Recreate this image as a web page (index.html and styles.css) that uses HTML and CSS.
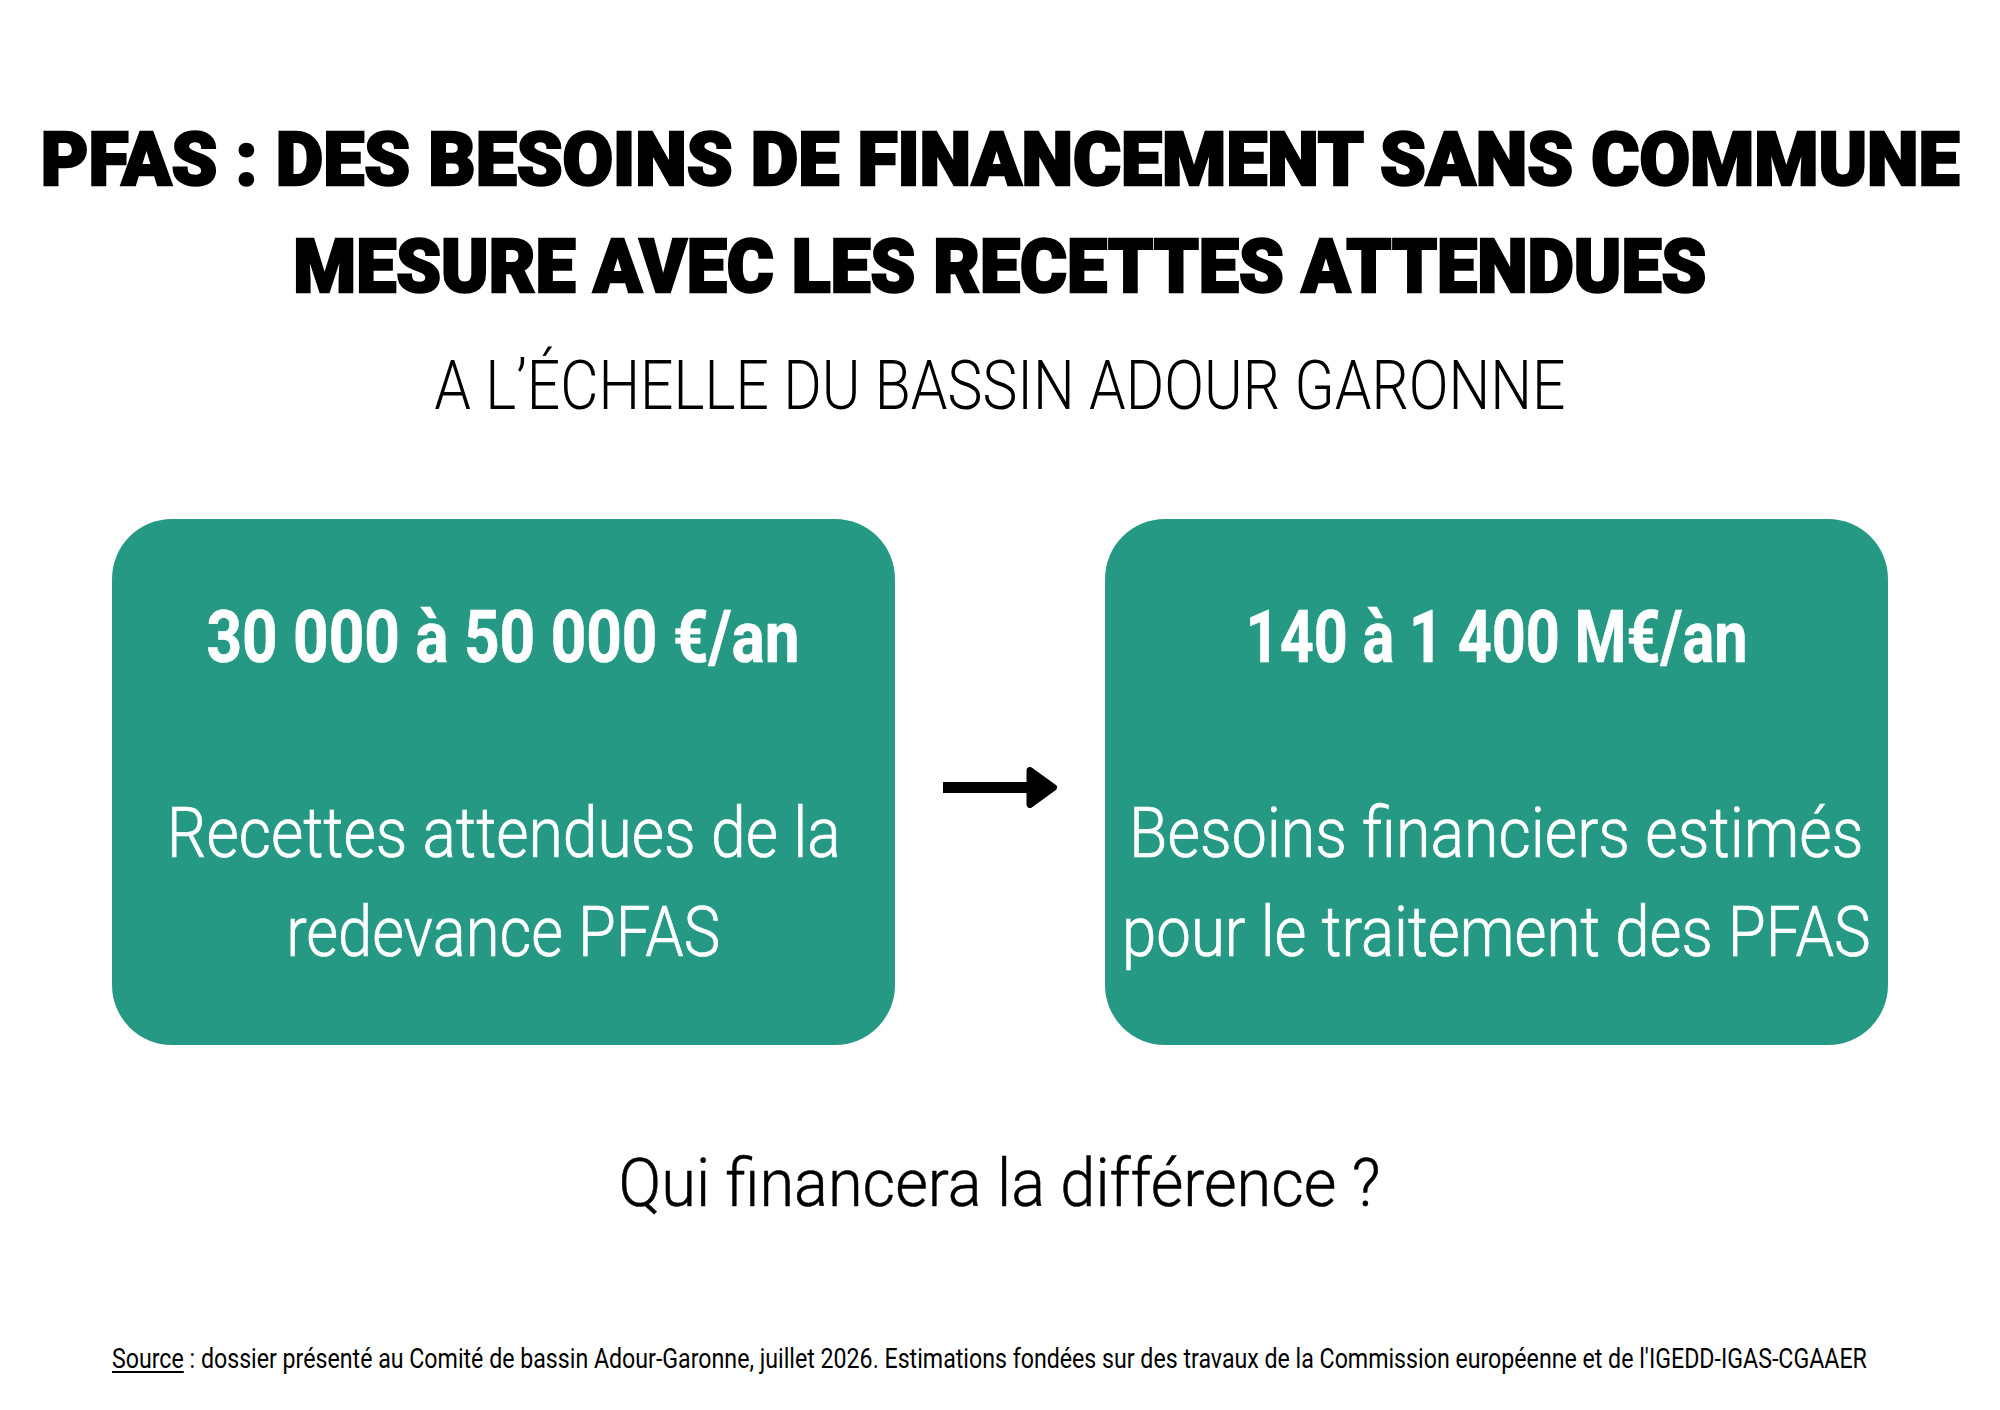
FILE: index.html
```html
<!DOCTYPE html>
<html lang="fr">
<head>
<meta charset="utf-8">
<title>PFAS : des besoins de financement sans commune mesure</title>
<link rel="stylesheet" href="styles.css">
</head>
<body>
<main class="poster">
  <h1 class="title">
    <span class="title-line t1">PFAS : DES BESOINS DE FINANCEMENT SANS COMMUNE</span>
    <span class="title-line t2">MESURE AVEC LES RECETTES ATTENDUES</span>
  </h1>
  <p class="subtitle">A L’ÉCHELLE DU BASSIN ADOUR GARONNE</p>

  <section class="compare">
    <div class="card">
      <p class="amount amount-left">30 000 à 50 000 €/an</p>
      <p class="desc desc-l1">Recettes attendues de la</p>
      <p class="desc desc-l2">redevance PFAS</p>
    </div>
    <svg class="arrow" viewBox="0 0 114 41" width="114" height="41" aria-hidden="true">
      <rect x="0" y="15" width="86" height="11" fill="#000"/>
      <path d="M87 3.5 L110.5 20.5 L87 37.5 Z" fill="#000" stroke="#000" stroke-width="7" stroke-linejoin="round"/>
    </svg>
    <div class="card">
      <p class="amount amount-right">140 à 1 400 M€/an</p>
      <p class="desc desc-r1">Besoins financiers estimés</p>
      <p class="desc desc-r2">pour le traitement des PFAS</p>
    </div>
  </section>

  <p class="question">Qui financera la différence ?</p>

  <p class="source"><u>Source</u> : dossier présenté au Comité de bassin Adour-Garonne, juillet 2026. Estimations fondées sur des travaux de la Commission européenne et de l'IGEDD-IGAS-CGAAER</p>
</main>
</body>
</html>
```

FILE: styles.css
```css
* {
  box-sizing: border-box;
}

html, body {
  margin: 0;
  padding: 0;
  background: #ffffff;
}

body {
  width: 2000px;
  height: 1410px;
  overflow: hidden;
  font-family: Roboto, "Liberation Sans", sans-serif;
  color: #000;
}

.poster {
  display: flex;
  flex-direction: column;
  align-items: center;
  padding-top: 106px;
}

p, h1 {
  margin: 0;
}

.title {
  display: flex;
  flex-direction: column;
  align-items: center;
  font-family: Roboto, "Liberation Sans", sans-serif;
  font-weight: 900;
  font-size: 74px;
  line-height: 107px;
  letter-spacing: 0;
  -webkit-text-stroke: 2.5px #000;
  paint-order: stroke fill;
}

.title-line {
  display: block;
  white-space: nowrap;
}

.t1 {
  transform: scaleX(0.99);
}

.t2 {
  transform: scaleX(0.968);
}

.subtitle {
  margin-top: 26px;
  font-weight: 300;
  font-size: 69px;
  line-height: 80px;
  white-space: nowrap;
  transform: scaleX(0.852);
}

.compare {
  margin-top: 93px;
  display: flex;
  align-items: center;
  gap: 48px;
}

.card {
  width: 783px;
  height: 526px;
  background: #269985;
  border-radius: 60px;
  color: #fff;
  display: flex;
  flex-direction: column;
  align-items: center;
  padding-top: 76px;
}

.amount {
  font-weight: 700;
  font-size: 72px;
  line-height: 86px;
  white-space: nowrap;
  margin-bottom: 103px;
  -webkit-text-stroke: 0.6px #fff;
}

.amount-left {
  transform: scaleX(0.862);
}

.amount-right {
  transform: scaleX(0.824);
}

.desc {
  font-weight: 300;
  font-size: 70px;
  line-height: 98.5px;
  white-space: nowrap;
  -webkit-text-stroke: 0.7px #fff;
}

.desc-l1 {
  transform: scaleX(0.892);
}

.desc-l2 {
  transform: scaleX(0.878);
}

.desc-r1 {
  transform: scaleX(0.895);
}

.desc-r2 {
  transform: scaleX(0.882);
}

.arrow {
  display: block;
  flex: none;
  margin-top: 10px;
}

.question {
  margin-top: 99px;
  font-weight: 300;
  font-size: 66px;
  line-height: 80px;
  white-space: nowrap;
  -webkit-text-stroke: 0.5px #000;
  transform: scaleX(0.956);
}

.source {
  align-self: flex-start;
  margin-top: 119px;
  margin-left: 112px;
  font-weight: 400;
  font-size: 27px;
  line-height: 32px;
  white-space: nowrap;
  transform: scaleX(0.858);
  transform-origin: left center;
}

.source u {
  text-underline-offset: 3px;
}
```
